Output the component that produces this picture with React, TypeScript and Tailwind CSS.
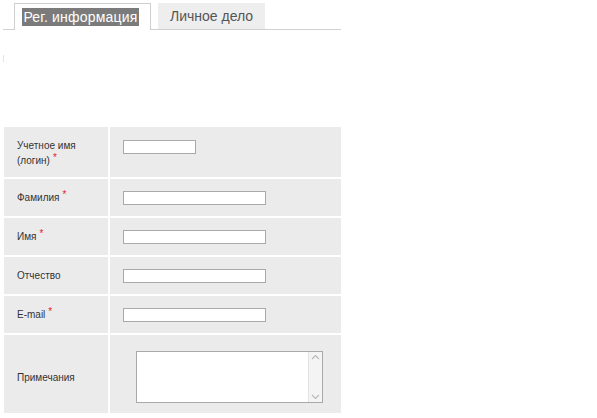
import React from 'react';

const Req: React.FC = () => <span className="text-[#e0262b] text-[10px] relative -top-[3px] ml-[3px]">*</span>;

const TextInput: React.FC<{ w: string }> = ({ w }) => (
    <input
        type="text"
        className={`${w} h-[14px] bg-white border border-[#a9a9a9] outline-none`}
    />
);

const Row: React.FC<{ label: React.ReactNode; h: string; children: React.ReactNode; align?: string }> = ({
    label,
    h,
    children,
    align = 'items-center',
}) => (
    <div className={`flex gap-[2px] ${h}`}>
        <div className={`w-[104px] bg-[#ecebeb] flex ${align} pl-[13px] pr-2 leading-[15px]`}>{label}</div>
        <div className={`flex-1 bg-[#ecebeb] flex ${align} pl-[13px]`}>{children}</div>
    </div>
);

const App: React.FC = () => {
    return (
        <div className="w-[597px] h-[418px] bg-white text-[10px] text-[#333] font-['Liberation_Sans',Arial,sans-serif]">
            {/* tabs */}
            <div className="ml-[3px] w-[338px] pt-[3px] border-b border-[#d0d0d0] flex items-end gap-[7px] pl-[11px]">
                <div className="w-[137px] h-[27px] border border-b-0 border-[#cfcfcf] bg-white px-[7px] pt-[4px] -mb-px">
                    <div className="bg-[#7b7b7b] text-white text-[14px] leading-[18px] h-[18px] w-[117px] whitespace-nowrap text-center tracking-[0.2px]">
                        Рег. информация
                    </div>
                </div>
                <div className="w-[107px] h-[26px] bg-[#eeeeee] text-[#555] text-[14px] leading-[26px] pl-[12px] whitespace-nowrap">
                    Личное дело
                </div>
            </div>

            <div className="ml-[3px] mt-[25px] w-px h-[7px] bg-[#e4e4e4]" />

            {/* form */}
            <div className="ml-[4px] mt-[65px] w-[337px] flex flex-col gap-[2px]">
                <Row
                    h="h-[50px]"
                    align="items-start pt-[11px]"
                    label={
                        <span>
                            Учетное имя
                            <br />
                            (логин)<Req />
                        </span>
                    }
                >
                    <div className="pt-[1px]">
                        <TextInput w="w-[73px]" />
                    </div>
                </Row>
                <Row h="h-[37px]" label={<span>Фамилия<Req /></span>}>
                    <TextInput w="w-[143px]" />
                </Row>
                <Row h="h-[37px]" label={<span>Имя<Req /></span>}>
                    <TextInput w="w-[143px]" />
                </Row>
                <Row h="h-[37px]" label={<span>Отчество</span>}>
                    <TextInput w="w-[143px]" />
                </Row>
                <Row h="h-[37px]" label={<span>E-mail<Req /></span>}>
                    <TextInput w="w-[143px]" />
                </Row>
                <div className="flex gap-[2px] h-[78px]">
                    <div className="w-[104px] bg-[#ecebeb] flex items-center pl-[13px] pt-[6px]">Примечания</div>
                    <div className="flex-1 bg-[#ecebeb] pl-[26px] pt-[16px]">
                        <div className="w-[187px] h-[52px] bg-white border border-[#a9a9a9] flex">
                            <div className="flex-1" />
                            <div className="w-[14px] bg-[#f4f4f4] border-l border-[#e2e2e2] flex flex-col justify-between items-center py-[2px]">
                                <svg width="9" height="6" viewBox="0 0 9 6">
                                    <path d="M1 5 L4.5 1.5 L8 5" fill="none" stroke="#b8b8b8" strokeWidth="1.2" />
                                </svg>
                                <svg width="9" height="6" viewBox="0 0 9 6">
                                    <path d="M1 1 L4.5 4.5 L8 1" fill="none" stroke="#b8b8b8" strokeWidth="1.2" />
                                </svg>
                            </div>
                        </div>
                    </div>
                </div>
            </div>
        </div>
    );
};

export default App;
